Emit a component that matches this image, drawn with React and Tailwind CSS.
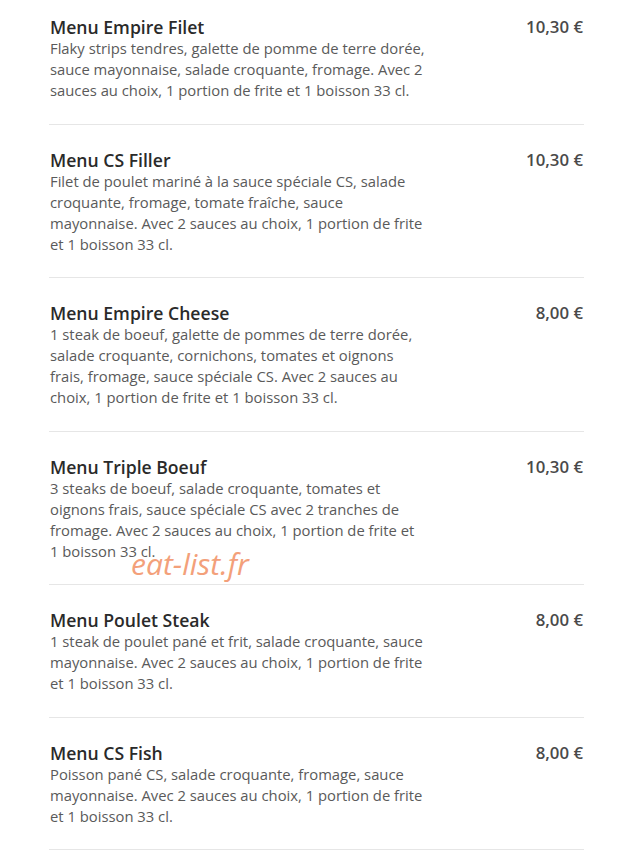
import React from "react";

const items = [
  {
    name: "Menu Empire Filet",
    price: "10,30 €",
    lines: [
      "Flaky strips tendres, galette de pomme de terre dorée,",
      "sauce mayonnaise, salade croquante, fromage. Avec 2",
      "sauces au choix, 1 portion de frite et 1 boisson 33 cl.",
    ],
  },
  {
    name: "Menu CS Filler",
    price: "10,30 €",
    lines: [
      "Filet de poulet mariné à la sauce spéciale CS, salade",
      "croquante, fromage, tomate fraîche, sauce",
      "mayonnaise. Avec 2 sauces au choix, 1 portion de frite",
      "et 1 boisson 33 cl.",
    ],
  },
  {
    name: "Menu Empire Cheese",
    price: "8,00 €",
    lines: [
      "1 steak de boeuf, galette de pommes de terre dorée,",
      "salade croquante, cornichons, tomates et oignons",
      "frais, fromage, sauce spéciale CS. Avec 2 sauces au",
      "choix, 1 portion de frite et 1 boisson 33 cl.",
    ],
  },
  {
    name: "Menu Triple Boeuf",
    price: "10,30 €",
    lines: [
      "3 steaks de boeuf, salade croquante, tomates et",
      "oignons frais, sauce spéciale CS avec 2 tranches de",
      "fromage. Avec 2 sauces au choix, 1 portion de frite et",
      "1 boisson 33 cl.",
    ],
  },
  {
    name: "Menu Poulet Steak",
    price: "8,00 €",
    lines: [
      "1 steak de poulet pané et frit, salade croquante, sauce",
      "mayonnaise. Avec 2 sauces au choix, 1 portion de frite",
      "et 1 boisson 33 cl.",
    ],
  },
  {
    name: "Menu CS Fish",
    price: "8,00 €",
    lines: [
      "Poisson pané CS, salade croquante, fromage, sauce",
      "mayonnaise. Avec 2 sauces au choix, 1 portion de frite",
      "et 1 boisson 33 cl.",
    ],
  },
];

export default function App() {
  return (
    <div
      className="relative w-[641px] h-[867px] bg-white overflow-hidden"
      style={{ fontFamily: '"Open Sans", "Liberation Sans", sans-serif' }}
    >
      <div className="ml-[49px] w-[535px] -mt-2">
        {items.map((it, i) => (
          <div
            key={i}
            className="flex justify-between border-b border-[#e6e6e6] pt-6 pb-[22.5px]"
          >
            <div className="pl-px">
              <div className="text-[17.6px] leading-[22px] font-semibold text-[#2a2a2a]">
                {it.name}
              </div>
              <div className="text-[14.8px] leading-[21px] text-[#5a5a5a]">
                {it.lines.map((l, j) => (
                  <div key={j} className="whitespace-nowrap">
                    {l}
                  </div>
                ))}
              </div>
            </div>
            <div className="text-[16.8px] leading-[22px] font-semibold text-[#4a4a4a] pr-px">
              {it.price}
            </div>
          </div>
        ))}
      </div>
      <div className="absolute left-[131px] top-[544px] text-[30px] leading-[40px] italic text-[#f3a07a]">
        eat-list.fr
      </div>
    </div>
  );
}
